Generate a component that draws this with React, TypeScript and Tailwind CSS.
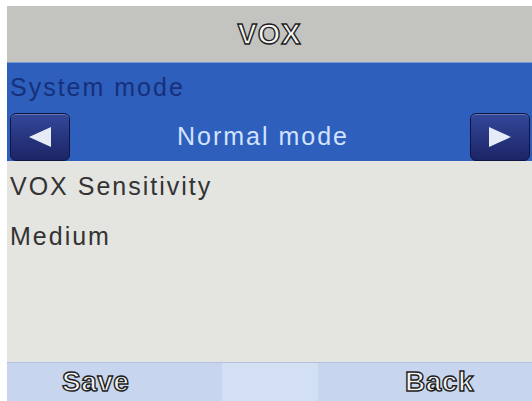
export default function App() {
  const outline = "[-webkit-text-stroke:1.4px_#1e1e1e] text-[#f4f4f2] font-bold";

  return (
    <div
      className="w-[532px] h-[401px] bg-white pl-[7px] pt-[6px] flex flex-col overflow-hidden"
      style={{ fontFamily: '"Liberation Sans", Arial, sans-serif' }}
    >
      {/* title bar */}
      <div className="h-[56px] bg-[#c3c4c0] flex items-center justify-center">
        <span className={`${outline} text-[29px] tracking-[1px] leading-none`}>VOX</span>
      </div>

      {/* selected item */}
      <div className="h-[99px] bg-[#2e5fbd] border-t border-[#7a9ad6] flex flex-col">
        <div className="h-[49px] flex items-center pl-[3px]">
          <span className="text-[25px] tracking-[2px] text-[#16307a] leading-none">System mode</span>
        </div>
        <div className="h-[49px] flex items-center pl-[3px] pr-[2px]">
          <ArrowButton dir="left" />
          <div className="flex-1 text-center text-[25px] tracking-[2px] text-[#d2e3ff] leading-none pr-[14px]">
            Normal mode
          </div>
          <ArrowButton dir="right" />
        </div>
      </div>

      {/* content */}
      <div className="flex-1 bg-[#e4e4e0] flex flex-col pl-[3px] text-[#333333] text-[25px] tracking-[2px] leading-none">
        <div className="h-[50px] flex items-center">VOX Sensitivity</div>
        <div className="h-[50px] flex items-center">Medium</div>
      </div>

      {/* soft keys */}
      <div className="h-[39px] bg-[#c7d6ee] border-t border-[#b3c2dc] grid grid-cols-[215px_96px_1fr]">
        <div className="flex items-center pl-[55px]">
          <span className={`${outline} text-[28px] tracking-[0.5px] leading-none`}>Save</span>
        </div>
        <div className="bg-[#d3e0f4]" />
        <div className="flex items-center justify-end pr-[58px]">
          <span className={`${outline} text-[28px] tracking-[0.5px] leading-none`}>Back</span>
        </div>
      </div>
    </div>
  );
}

function ArrowButton({ dir }: { dir: "left" | "right" }) {
  return (
    <div className="w-[60px] h-[48px] rounded-[6px] border border-[#0f1540] bg-gradient-to-b from-[#33479a] to-[#1c2566] flex items-center justify-center shadow-[inset_0_1px_0_rgba(255,255,255,0.25)]">
      <svg width="26" height="22" viewBox="0 0 26 22">
        {dir === "left" ? (
          <polygon points="2,11 24,1 24,21" fill="#e6ecf7" />
        ) : (
          <polygon points="24,11 2,1 2,21" fill="#e6ecf7" />
        )}
      </svg>
    </div>
  );
}
